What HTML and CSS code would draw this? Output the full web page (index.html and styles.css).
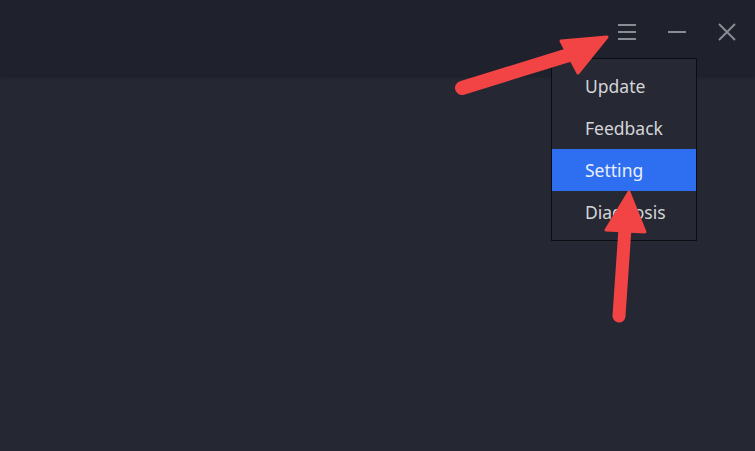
FILE: index.html
```html
<!DOCTYPE html>
<html lang="en">
<head>
    <meta charset="UTF-8">
    <meta name="viewport" content="width=device-width, initial-scale=1.0">
    <title>Menu</title>
    <link rel="stylesheet" href="styles.css">
</head>
<body>
    <div class="window">
        <div class="titlebar">
            <div class="controls">
                <span class="ctl">
                    <svg width="20" height="18" viewBox="0 0 20 18"><path d="M1 2h18M1 9h18M1 16h18" stroke="#8a8c94" stroke-width="2"/></svg>
                </span>
                <span class="ctl">
                    <svg width="20" height="18" viewBox="0 0 20 18"><path d="M1 9h18" stroke="#8a8c94" stroke-width="2"/></svg>
                </span>
                <span class="ctl">
                    <svg width="20" height="18" viewBox="0 0 20 18"><path d="M2 1l16 16M18 1L2 17" stroke="#8a8c94" stroke-width="2"/></svg>
                </span>
            </div>
        </div>
        <div class="content"></div>

        <ul class="menu">
            <li>Update</li>
            <li>Feedback</li>
            <li class="active">Setting</li>
            <li>Diagnosis</li>
        </ul>

        <!-- annotation arrows -->
        <svg class="marks" width="755" height="451" viewBox="0 0 755 451">
            <path d="M462 88L572 54" stroke="#f24444" stroke-width="14" stroke-linecap="round"/>
            <path d="M607 37L561 41L578 73Z" fill="#f24444" stroke="#f24444" stroke-width="3" stroke-linejoin="round"/>
            <path d="M619 316L625 228" stroke="#f24444" stroke-width="13" stroke-linecap="round"/>
            <path d="M629 192L606 230L645 232Z" fill="#f24444" stroke="#f24444" stroke-width="3" stroke-linejoin="round"/>
        </svg>
    </div>
</body>
</html>
```

FILE: styles.css
```css
body { margin: 0; background: #252733; font-family: "Noto Sans", "DejaVu Sans", sans-serif; }
.window { position: relative; width: 755px; height: 451px; overflow: hidden; background: #252733; }
.titlebar { height: 76px; background: #1f212c; display: flex; justify-content: flex-end; box-shadow: 0 1px 2px #1b1d26; }
.controls { display: flex; gap: 30px; padding: 23px 18px 0 0; }
.ctl { width: 20px; height: 18px; display: block; }
.ctl svg { display: block; }
.content { height: 375px; }
.menu { position: absolute; left: 551px; top: 58px; width: 144px; margin: 0; padding: 6px 0 7px; list-style: none; background: #262833; border: 1px solid #0c0d11; }
.menu li { height: 42px; line-height: 42px; padding-left: 33px; font-size: 17.5px; color: #d4d5d8; }
.menu li.active { background: #2e6ef0; color: #e8eefc; }
.marks { position: absolute; left: 0; top: 0; }
```
